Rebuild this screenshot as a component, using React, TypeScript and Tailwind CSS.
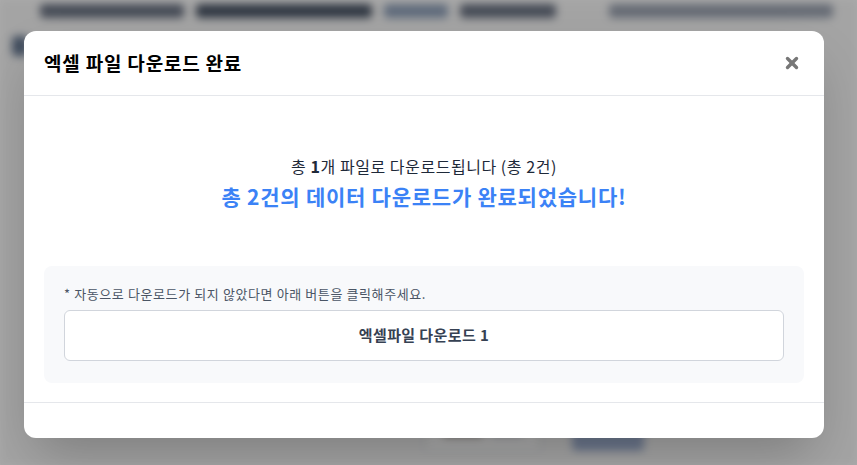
import { X } from 'lucide-react';

const font = { fontFamily: '"Noto Sans CJK KR", "Noto Sans", sans-serif' };

function BackgroundPage() {
  // Page behind the modal, blurred and dimmed
  return (
    <div className="h-[465px] w-full overflow-hidden bg-[#f5f5f5] blur-[4px]">
      <div className="flex items-center gap-3 pl-10 pr-6 pt-[4px]">
        <div className="h-[14px] w-36 rounded bg-gray-500" />
        <div className="h-[14px] w-44 rounded bg-gray-600" />
        <div className="h-[14px] w-16 rounded bg-slate-400" />
        <div className="h-[14px] w-24 rounded bg-gray-500" />
        <div className="ml-auto h-[14px] w-56 rounded bg-gray-400" />
      </div>
      <div className="mt-[18px] ml-3 h-5 w-4 rounded bg-slate-500" />
      <div className="mt-[355px] flex gap-8 pl-[425px]">
        <div className="flex h-10 w-[115px] items-center justify-center gap-2 rounded border border-gray-300 bg-white">
          <div className="h-3 w-10 rounded bg-stone-400" />
          <div className="h-3 w-8 rounded bg-gray-300" />
        </div>
        <div className="h-10 w-[72px] rounded bg-[#9fb0d0]" />
      </div>
    </div>
  );
}

export default function App() {
  return (
    <div className="relative h-[465px] w-[857px] overflow-hidden" style={font}>
      <BackgroundPage />
      <div className="absolute inset-0 bg-black/[0.33]" />
      <div className="absolute left-[24px] top-[31px] w-[800px] rounded-xl bg-white shadow-2xl">
        <div className="flex h-[65px] items-center justify-between border-b border-gray-200 px-5">
          <h2 className="text-[19px] font-bold tracking-[0.8px] text-black">엑셀 파일 다운로드 완료</h2>
          <button className="flex h-6 w-6 items-center justify-center text-[#777]">
            <X size={18} strokeWidth={4.5} />
          </button>
        </div>
        <div className="px-5 pt-[57px] pb-[19px]">
          <div className="text-center">
            <p className="text-[16px] leading-[26px] tracking-[0.55px] text-gray-800">
              총 <span className="font-bold">1</span>개 파일로 다운로드됩니다 (총 2건)
            </p>
            <p className="mt-[2px] text-[21px] font-bold leading-[30px] tracking-[0.75px] text-[#3b82f6]">
              총 2건의 데이터 다운로드가 완료되었습니다!
            </p>
          </div>
          <div className="mt-[55px] rounded-lg bg-[#f8f9fb] px-5 pt-[18px] pb-[22px]">
            <p className="text-[13px] leading-[20px] tracking-[0.6px] text-gray-600">
              * 자동으로 다운로드가 되지 않았다면 아래 버튼을 클릭해주세요.
            </p>
            <button className="mt-[6px] flex h-[51px] w-full items-center justify-center rounded-md border border-gray-300 bg-white text-[15px] font-bold tracking-[0.4px] text-gray-700">
              엑셀파일 다운로드 1
            </button>
          </div>
        </div>
        <div className="h-[36px] border-t border-gray-200" />
      </div>
    </div>
  );
}
